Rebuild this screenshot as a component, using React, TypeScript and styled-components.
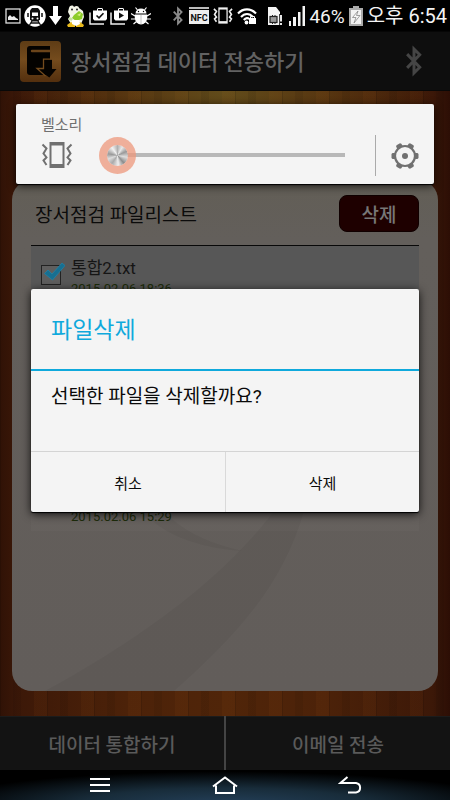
import React from "react";
import styled, { createGlobalStyle } from "styled-components";

const GlobalStyle = createGlobalStyle`
  * { box-sizing: border-box; }
  body {
    margin: 0;
    background: #000;
    font-family: Roboto, "Noto Sans CJK KR", sans-serif;
  }
  button, input { font-family: inherit; margin: 0; }
  svg { display: block; flex: none; }
`;

const Page = styled.div`
  position: relative;
  display: flex;
  flex-direction: column;
  min-height: 100vh;
`;

/* ---------- status bar ---------- */

const StatusBar = styled.div`
  display: flex;
  align-items: center;
  justify-content: space-between;
  height: 31px;
  padding: 0 3px 0 5px;
  background: #000;
  color: #f4f4f4;
`;

const StatusGroup = styled.div<{ $gap: number }>`
  display: flex;
  align-items: center;
  gap: ${(p) => p.$gap}px;
`;

const StatusText = styled.span<{ $size: number }>`
  padding-top: 2px;
  font-size: ${(p) => p.$size}px;
  line-height: 29px;
  white-space: nowrap;
`;

/* ---------- app header ---------- */

const AppHeader = styled.header`
  display: flex;
  align-items: center;
  gap: 10px;
  height: 60px;
  padding: 0 28px 0 20px;
  background: #0e0e0e;
  border-top: 1px solid #060606;
  border-bottom: 1px solid #080808;
`;

const AppTitle = styled.h1`
  flex: 1;
  margin: 0;
  padding-top: 4px;
  font-size: 22px;
  line-height: 32px;
  font-weight: 500;
  color: #626262;
  white-space: nowrap;
`;

/* ---------- content ---------- */

const Wood = styled.main`
  flex: 1;
  display: flex;
  flex-direction: column;
  padding: 89px 12px 25px;
  background:
    repeating-linear-gradient(90deg, rgba(0, 0, 0, 0.12) 0 1px, transparent 1px 13px, rgba(0, 0, 0, 0.07) 13px 21px, transparent 21px 34px, rgba(255, 140, 40, 0.04) 34px 47px),
    radial-gradient(ellipse 46% 110px at 50% 0, rgba(104, 92, 34, 0.7), rgba(100, 76, 24, 0.4) 55%, transparent),
    linear-gradient(90deg, #301206 0, #3c1808 4%, #4c2209 28%, #502509 50%, #4c2209 72%, #3c1808 96%, #2c0e05 100%);
`;

const Panel = styled.section`
  position: relative;
  flex: 1;
  padding: 15px 19px 0;
  border-radius: 20px;
  overflow: hidden;
  background: linear-gradient(180deg, #625e56 0, #635f5b 60px, #625d5a 100%);
`;

const Swoosh = styled.svg`
  position: absolute;
  left: 0;
  bottom: 0;
  width: 100%;
  height: 180px;
`;

const PanelHead = styled.div`
  display: flex;
  align-items: center;
  justify-content: space-between;
  padding: 0 0 13px 4px;
  border-bottom: 1px solid #080808;
`;

const PanelTitle = styled.h2`
  margin: 0;
  padding-top: 4px;
  font-size: 19px;
  line-height: 33px;
  font-weight: 400;
  color: #0b0b0b;
`;

const DeleteButton = styled.button`
  width: 80px;
  height: 37px;
  padding: 4px 0 0;
  border: 1px solid #100000;
  border-radius: 8px;
  background: #1e0000;
  color: #777;
  font-size: 19px;
  font-weight: 500;
  line-height: 31px;
`;

const FileList = styled.ul`
  display: flex;
  flex-direction: column;
  justify-content: space-between;
  min-height: 285px;
  margin: 0;
  padding: 0;
  list-style: none;
`;

const FileRow = styled.li<{ $selected?: boolean }>`
  display: flex;
  align-items: flex-end;
  gap: 10px;
  height: 57px;
  padding: 0 10px 6px;
  background: ${(p) => (p.$selected ? "#575757" : "rgba(255,255,255,0.02)")};
`;

const FileInfo = styled.div`
  display: flex;
  flex-direction: column;
`;

const FileName = styled.label`
  padding-bottom: 2px;
  font-size: 17px;
  line-height: 22px;
  color: #151515;
`;

const FileDate = styled.time`
  font-size: 13px;
  line-height: 16px;
  color: #1d2c0a;
`;

const CheckHolder = styled.span`
  position: relative;
  width: 20px;
  height: 20px;
  margin-bottom: 12px;
`;

const CheckBox = styled.input`
  appearance: none;
  display: block;
  width: 20px;
  height: 20px;
  border: 1px solid #222;
  background: #5e5e5e;
`;

const Tick = styled.svg`
  position: absolute;
  left: 2px;
  top: -3px;
  pointer-events: none;
`;

const CheckSpace = styled.span`
  width: 20px;
`;

/* ---------- bottom bars ---------- */

const ActionBar = styled.div`
  display: grid;
  grid-template-columns: 1fr 1fr;
  gap: 2px;
  height: 54px;
  background: #444;
`;

const ActionButton = styled.button`
  padding: 4px 0 0;
  border: 0;
  border-top: 1px solid #1c1c1c;
  background: #131313;
  color: #5a5a5a;
  font-size: 19px;
  font-weight: 500;
  line-height: 28px;
`;

const NavBar = styled.nav`
  display: grid;
  grid-template-columns: repeat(3, 1fr);
  height: 30px;
  padding: 0 38px;
  background: radial-gradient(ellipse 64% 110% at 50% 115%, #24405a 0, #182c3a 50%, #000 100%);
`;

const NavButton = styled.button`
  display: flex;
  align-items: center;
  justify-content: center;
  padding: 0;
  border: 0;
  background: none;
`;

/* ---------- volume popup ---------- */

const VolumePopup = styled.section`
  position: absolute;
  top: 104px;
  left: 16px;
  right: 16px;
  display: flex;
  align-items: flex-end;
  height: 80px;
  padding: 0 15px 8px 25px;
  border-radius: 2px;
  background: #f4f4f4;
  box-shadow: 0 1px 1px #000, 0 2px 9px rgba(0, 0, 0, 0.75);
`;

const VolumeMain = styled.div`
  flex: 1;
  display: flex;
  flex-direction: column;
  padding-bottom: 2px;
`;

const VolumeLabel = styled.label`
  font-size: 15px;
  line-height: 21px;
  color: #707070;
`;

const VolumeRow = styled.div`
  display: flex;
  align-items: center;
  gap: 26px;
  height: 38px;
`;

const VolumeSlider = styled.input`
  appearance: none;
  flex: 1;
  min-width: 0;
  height: 38px;
  background: transparent;

  &::-webkit-slider-runnable-track {
    height: 4px;
    background: linear-gradient(90deg, transparent 18px, #b8b8b8 18px);
  }
  &::-webkit-slider-thumb {
    appearance: none;
    width: 37px;
    height: 37px;
    margin-top: -16px;
    border: 8px solid rgba(238, 152, 124, 0.75);
    border-radius: 50%;
    background: conic-gradient(#b0b0b0, #e8e8e8 30deg, #999 65deg, #ddd 100deg, #8d8d8d 140deg, #eee 175deg, #aaa 215deg, #ddd 250deg, #999 280deg, #f2f2f2 325deg, #b0b0b0) padding-box;
  }
`;

const SettingsButton = styled.button`
  display: flex;
  align-items: center;
  justify-content: flex-end;
  width: 44px;
  height: 41px;
  margin-left: 30px;
  padding: 0;
  border: 0;
  border-left: 1px solid #aaa;
  background: none;
`;

/* ---------- dialog ---------- */

const DialogLayer = styled.div`
  position: absolute;
  inset: 0;
  display: flex;
  align-items: center;
  padding: 1px 31px 0;
  pointer-events: none;
`;

const Dialog = styled.section`
  width: 100%;
  border-radius: 2px;
  background: #f4f4f4;
  color: #0a0a0a;
  pointer-events: auto;
  box-shadow: 0 1px 1px #000, 0 2px 10px rgba(0, 0, 0, 0.85);
`;

const DialogTitle = styled.h2`
  margin: 0;
  padding: 4px 20px 0;
  border-bottom: 2px solid #0fa9dc;
  font-size: 23px;
  line-height: 76px;
  font-weight: 400;
  color: #0fa9dc;
`;

const DialogMessage = styled.p`
  min-height: 80px;
  margin: 0;
  padding: 12px 20px 0;
  font-size: 19px;
  line-height: 28px;
`;

const DialogActions = styled.div`
  display: grid;
  grid-template-columns: 1fr 1fr;
  border-top: 1px solid #d4d4d4;
`;

const DialogButton = styled.button`
  height: 60px;
  padding: 0;
  border: 0;
  background: none;
  color: #0a0a0a;
  font-size: 15px;

  & + & {
    border-left: 1px solid #d9d9d9;
  }
`;

/* ---------- icons ---------- */

const PictureIcon = () => (
  <svg width="16" height="16" viewBox="0 0 16 16">
    <rect x="1" y="1" width="14" height="14" fill="none" stroke="#ddd" strokeWidth="1.3" />
    <path d="M3 12V9l2-2 2 2 2-1 2 2 2 1v1z" fill="#eee" />
  </svg>
);

const TrainIcon = () => (
  <svg width="22" height="22" viewBox="0 0 22 22">
    <circle cx="11" cy="11" r="10.7" fill="#fff" />
    <path d="M8 3h6l2 2.500v9L14 16.500H8l-2-2v-9z" fill="#111" />
    <rect x="8" y="7.500" width="6" height="3.500" fill="#fff" />
    <circle cx="8.500" cy="13.500" r="1" fill="#fff" />
    <circle cx="13.500" cy="13.500" r="1" fill="#fff" />
    <path d="M8 16l-2.500 4M14 16l2.500 4M7 18h8" stroke="#111" strokeWidth="1.300" />
    <path d="M4 8v4M18 8v4" stroke="#111" strokeWidth="1.500" />
  </svg>
);

const DownIcon = () => (
  <svg width="13" height="19" viewBox="0 0 13 19">
    <path d="M4 0h5v10h4l-6.500 9L0 10h4z" fill="#fff" />
  </svg>
);

const DinoIcon = () => (
  <svg width="21" height="22" viewBox="0 0 21 22">
    <path d="M4 3c1-3 4-3 5-1 2-2 5-1 5 1l4 3 1 6-3 7H6L3 14l2-3-2-4z" fill="#f4f5e8" />
    <path d="M9 10l5-4 4 3-1 5-6 2-4-3z" fill="#8dcc2a" />
    <path d="M4 12l3 1 1 3-4-1z" fill="#c6dfa0" />
    <path d="M12 10l4-2-1 3z" fill="#d9ef85" />
    <circle cx="7" cy="4.500" r="1" fill="#222" />
    <circle cx="12" cy="4.500" r="1" fill="#222" />
    <path d="M2 20l4-3 4 3v2H3zM11 20l4-3 4 3-1 2h-7z" fill="#e8b91c" />
    <path d="M7 15h7l1 4-4 2-4-2z" fill="#fff" />
  </svg>
);

const BagIcon = ({ play }: { play?: boolean }) => (
  <svg width="18" height="18" viewBox="0 0 18 18">
    <path d="M4 3.500h4V2l1-1h4l1 1v1.500h4V12l-1.500 1.500h-11L4 12z" fill="#fff" />
    <path d="M9 3.500V2h4v1.500z" fill="#000" />
    <path d="M1 5.500V17h14" fill="none" stroke="#eee" strokeWidth="1.500" />
    {play ? (
      <path d="M9 5.500l5 3-5 3z" fill="#111" />
    ) : (
      <path d="M7.500 8.500l2.500 2.300 4.500-4.600" fill="none" stroke="#111" strokeWidth="1.600" />
    )}
  </svg>
);

const BugIcon = () => (
  <svg width="20" height="18" viewBox="0 0 20 18">
    <path d="M4.500 6.500a5.500 5 0 0 1 11 0z" fill="#fff" />
    <path d="M3.800 7.500h12.400V11a6.200 6.500 0 0 1-12.400 0z" fill="#fff" />
    <path d="M10 8v9" stroke="#999" strokeWidth=".6" />
    <path d="M6.500 3L4.500 .5M13.500 3l2-2.500M4 9L0 6.500M16 9l4-2.500M4 12H0M16 12h4M5.500 14.500L2.500 17M14.500 14.500l3 2.500" stroke="#fff" strokeWidth="1.200" />
    <circle cx="7.500" cy="4.500" r=".7" fill="#000" />
    <circle cx="12.500" cy="4.500" r=".7" fill="#000" />
  </svg>
);

const BluetoothIcon = ({ w, h, color }: { w: number; h: number; color: string }) => (
  <svg width={w} height={h} viewBox="0 0 14 28">
    <path d="M1 8l11 11.500L7 24.500V3.500L12 8.500 1 20" fill="none" stroke={color} strokeWidth="2.600" />
  </svg>
);

const NfcIcon = () => (
  <svg width="20" height="17" viewBox="0 0 20 17">
    <rect width="20" height="2" fill="#bbb" />
    <rect y="3" width="20" height="14" fill="#eee" />
    <text x="10" y="14" textAnchor="middle" fontFamily="Roboto, sans-serif" fontWeight="700" fontSize="9" fill="#111">NFC</text>
  </svg>
);

const VibrateIcon = ({ w, h, color, fill, wave }: { w: number; h: number; color: string; fill: string; wave: number }) => (
  <svg width={w} height={h} viewBox="0 0 32 26">
    <path d="M8.500 0h15v26h-15z" fill={color} />
    <path d="M10.500 3.500h11v18.500h-11z" fill={fill} />
    <path d="M1.500 2.500l4 4-3 5 3 4-3 3 3 4.500M30.500 2.500l-4 4 3 5-3 4 3 3-3 4.500" fill="none" stroke={color} strokeWidth={wave} />
  </svg>
);

const WifiIcon = () => (
  <svg width="20" height="18" viewBox="0 0 20 18">
    <path d="M1 6.500c5-5.500 13-5.500 18 0M4 10c3.500-4 8.500-4 12 0M6.800 13c2-2.300 4.200-2.300 5.400-1" fill="none" stroke="#fff" strokeWidth="2.100" />
    <circle cx="9.500" cy="15.500" r="1.900" fill="#fff" />
    <rect x="12" y="11" width="7" height="6" fill="#fff" />
    <path d="M13.500 11.500V9.500h4v2" fill="none" stroke="#fff" />
  </svg>
);

const SimIcon = () => (
  <svg width="24" height="20" viewBox="0 0 24 20">
    <path d="M7 1h8l4 5v13H7z" fill="#f4f4f4" />
    <rect x="9" y="10.500" width="7" height="6" fill="#999" stroke="#222" strokeWidth="1.200" />
    <path d="M11.500 9v2M14 9v2M11.500 16v2M14 16v2" stroke="#222" />
    <path d="M20 8v12" stroke="#000" strokeWidth="3.500" />
    <path d="M20 9v6.500M20 17v2" stroke="#fff" strokeWidth="1.800" />
  </svg>
);

const SignalIcon = () => (
  <svg width="16" height="20" viewBox="0 0 16 20">
    <path d="M0 15h2v5H0zM4 11h3v9H4zM9 6h2.500v14H9zM13.500 0H16v20h-2.500z" fill="#f4f4f4" />
  </svg>
);

const BatteryIcon = () => (
  <svg width="14" height="20" viewBox="0 0 14 20">
    <path d="M4 0h6v2h4v18H0V2h4z" fill="#aaa" />
    <rect x="2" y="4" width="10" height="14" fill="#f2f2f2" />
    <path d="M9 5L3.500 11.500H7L5 17l6-7.500H7.500z" fill="#f8f8f8" stroke="#888" strokeWidth=".8" />
  </svg>
);

const BookIcon = () => (
  <svg width="41" height="41" viewBox="0 0 41 41">
    <defs>
      <linearGradient id="bookWood" x1="0" x2="0" y1="0" y2="1">
        <stop offset="0" stopColor="#5e3c15" />
        <stop offset=".45" stopColor="#744b1d" />
        <stop offset="1" stopColor="#532f0e" />
      </linearGradient>
    </defs>
    <rect width="41" height="41" rx="4" fill="url(#bookWood)" />
    <path d="M10 5a3 3 0 0 0-3 3v23a3 3 0 0 0 3 3h17l3-3V5z" fill="#040200" />
    <path d="M30.500 8.800H12a1.200 1.200 0 0 0 0 2.400h18.500z" fill="#6b441a" />
    <path d="M23.500 18.500H32v9.500h4.500l-7.200 8.500L17.500 28h6z" fill="#040200" />
    <path d="M33 18.200h-9.500V27.500H17l8.500 7.500" fill="none" stroke="#744b1d" strokeWidth="1.300" />
  </svg>
);

const GearIcon = () => (
  <svg width="28" height="28" viewBox="0 0 28 28">
    <circle cx="14" cy="14" r="10" fill="none" stroke="#707070" strokeWidth="2.200" />
    <circle cx="14" cy="14" r="3" fill="#707070" />
    {[0, 60, 120, 180, 240, 300].map((a) => (
      <path key={a} d="M23.500 11h3l1 1v4l-1 1h-3z" fill="#707070" transform={`rotate(${a} 14 14)`} />
    ))}
  </svg>
);

export default function App() {
  return (
    <Page>
      <GlobalStyle />
      <StatusBar>
        <StatusGroup $gap={3}>
          <PictureIcon />
          <TrainIcon />
          <DownIcon />
          <DinoIcon />
          <BagIcon />
          <BagIcon play />
          <BugIcon />
        </StatusGroup>
        <StatusGroup $gap={4}>
          <BluetoothIcon w={14} h={20} color="#8a8a8a" />
          <NfcIcon />
          <VibrateIcon w={20} h={17} color="#f0f0f0" fill="#000" wave={2.6} />
          <WifiIcon />
          <SimIcon />
          <SignalIcon />
          <StatusText $size={19}>46%</StatusText>
          <BatteryIcon />
          <StatusText $size={20}>오후 6:54</StatusText>
        </StatusGroup>
      </StatusBar>

      <AppHeader>
        <BookIcon />
        <AppTitle>장서점검 데이터 전송하기</AppTitle>
        <BluetoothIcon w={16} h={32} color="#454545" />
      </AppHeader>

      <Wood>
        <Panel>
          <Swoosh viewBox="0 0 426 180" preserveAspectRatio="xMidYMax meet">
            <path d="M33 180C120 133 210 70 262 0H292C272 70 230 120 162 180z" fill="rgba(0,0,0,0.04)" />
            <path d="M138 8Q170 36 231 40Q185 30 160 8z" fill="rgba(0,0,0,0.04)" />
          </Swoosh>
          <PanelHead>
            <PanelTitle>장서점검 파일리스트</PanelTitle>
            <DeleteButton type="button">삭제</DeleteButton>
          </PanelHead>
          <FileList>
            <FileRow $selected>
              <CheckHolder>
                <CheckBox id="file" type="checkbox" defaultChecked />
                <Tick width="22" height="20" viewBox="0 0 22 20">
                  <path d="M1.500 11.500l3.500-3.500 4 4L19 1l3 2.500L9.500 18z" fill="#176f91" stroke="#1e83a8" strokeWidth=".8" />
                </Tick>
              </CheckHolder>
              <FileInfo>
                <FileName htmlFor="file">통합2.txt</FileName>
                <FileDate>2015.02.06 18:36</FileDate>
              </FileInfo>
            </FileRow>
            <FileRow>
              <CheckSpace />
              <FileDate>2015.02.06 15:29</FileDate>
            </FileRow>
          </FileList>
        </Panel>
      </Wood>

      <ActionBar>
        <ActionButton type="button">데이터 통합하기</ActionButton>
        <ActionButton type="button">이메일 전송</ActionButton>
      </ActionBar>

      <NavBar>
        <NavButton type="button" aria-label="메뉴">
          <svg width="20" height="16" viewBox="0 0 20 16">
            <path d="M0 2h20M0 8h20M0 14h20" stroke="#fff" strokeWidth="2" />
          </svg>
        </NavButton>
        <NavButton type="button" aria-label="홈">
          <svg width="26" height="18" viewBox="0 0 26 18">
            <path d="M1 10.500L13 1.500l12 9M4 9.500V17h18V9.500" fill="none" stroke="#fff" strokeWidth="2" />
          </svg>
        </NavButton>
        <NavButton type="button" aria-label="뒤로">
          <svg width="24" height="18" viewBox="0 0 24 18">
            <path d="M9.500 1L2.500 7H18a4.800 4.800 0 0 1 0 9.500H10" fill="none" stroke="#fff" strokeWidth="2" />
          </svg>
        </NavButton>
      </NavBar>

      <VolumePopup>
        <VolumeMain>
          <VolumeLabel htmlFor="ring">벨소리</VolumeLabel>
          <VolumeRow>
            <VibrateIcon w={32} h={26} color="#707070" fill="#f4f4f4" wave={2} />
            <VolumeSlider id="ring" type="range" min={0} max={7} defaultValue={0} />
          </VolumeRow>
        </VolumeMain>
        <SettingsButton type="button" aria-label="설정">
          <GearIcon />
        </SettingsButton>
      </VolumePopup>

      <DialogLayer>
        <Dialog role="dialog" aria-labelledby="dialog-title">
          <DialogTitle id="dialog-title">파일삭제</DialogTitle>
          <DialogMessage>선택한 파일을 삭제할까요?</DialogMessage>
          <DialogActions>
            <DialogButton type="button">취소</DialogButton>
            <DialogButton type="button">삭제</DialogButton>
          </DialogActions>
        </Dialog>
      </DialogLayer>
    </Page>
  );
}
